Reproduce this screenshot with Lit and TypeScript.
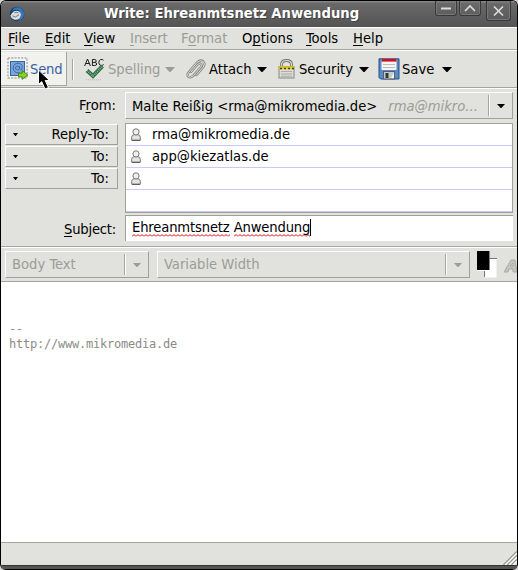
import { LitElement, html, css, svg } from "lit";
import { customElement, property } from "lit/decorators.js";

const arrow = (w: number, h: number) =>
  html`<svg class="arrow" width=${w} height=${h} viewBox="0 0 10 6" preserveAspectRatio="none"><path d="M0 0H10L5.5 6H4.5Z" fill="currentColor" /></svg>`;

const person = html`<svg class="person" width="10" height="13" viewBox="0 0 10 13">
  <path d="M.7 12.3V9.2Q.7 7 3 6.7H7Q9.3 7 9.3 9.2V12.3Z" fill="#e4e4e2" stroke="#777976" />
  <circle cx="5" cy="3.9" r="3.1" fill="#eeeeec" stroke="#777976" />
  <path d="M1 12.3H9" stroke="#555753" />
</svg>`;

const thunderbird = html`<svg width="16" height="16" viewBox="0 0 16 16">
  <circle cx="8" cy="8" r="7.3" fill="#173f75" />
  <path d="M3 5Q5 0 11 1.5Q15.5 4 15 9Q14 14 9 15Q13 11 11.5 6Q8 2 3 5Z" fill="#2f78bd" />
  <path d="M1.5 9.5Q2.5 7 5 5.2Q9 4 11.5 6.5Q12.8 9 11 12Q9 14.2 5.5 13.8Q2 12.5 1.5 9.5Z" fill="#dcdddd" />
  <path d="M3.5 9.8L6.3 11L10 8.8M5.5 6.8Q8 5.6 9.5 7" stroke="#6b6a66" stroke-width=".9" fill="none" />
</svg>`;

const sendIcon = html`<svg width="22" height="23" viewBox="0 0 22 23">
  <rect x="1" y="1" width="19" height="20" fill="#f4f4f0" stroke="#aaaca6" stroke-width="1.5" stroke-dasharray="2 1.3" />
  <rect x="3.5" y="4.5" width="14" height="14" fill="#7ba6da" stroke="#3465a4" />
  <circle cx="10.5" cy="11" r="2" fill="none" stroke="#3d6bab" />
  <path d="M12.6 9V12Q13.5 14 15 12Q16 7 11.8 6.3Q6.4 6 6.2 11Q6.5 16.5 12.5 15.6" fill="none" stroke="#3d6bab" />
  <path d="M11.5 16.2H15.2V13.5L20.8 18L15.2 22.3V19.8H11.5Z" fill="#82d42a" stroke="#4b8b08" />
</svg>`;

const spellIcon = html`<svg width="21" height="23" viewBox="0 0 21 23">
  <g fill="none" stroke="#1c1c1c">
    <path d="M.6 8L3.5 1L6.4 8M1.7 5.5H5.3" />
    <path d="M8.4 7.5V1.5H10.7Q12.4 1.8 12.2 3.2Q12 4.4 10.4 4.4H8.4M10.4 4.4Q12.9 4.6 12.8 6Q12.5 7.5 10.7 7.5H8.4" />
    <path d="M19.5 2.3Q18.3 1 16.7 1.5Q14.7 2.3 14.8 4.8Q15.2 7.5 17.3 7.5Q18.8 7.5 19.7 6.5" />
  </g>
  <path d="M3 12.5L9 18L18.5 8.2" fill="none" stroke="#2d6d43" stroke-width="4" />
  <path d="M3 12.5L9 18L18.5 8.2" fill="none" stroke="#93b49a" stroke-width="1.8" stroke-dasharray="1 1" />
  <path d="M2 21.8H18" stroke="#b8b9b4" stroke-dasharray="1 1" />
</svg>`;

const clipIcon = html`<svg width="20" height="21" viewBox="0 0 20 21">
  <g fill="none" stroke-linecap="round">
    <path d="M5 13L11.5 5.5Q14 3.5 15.2 5.5Q15.8 7 14.5 8.6L7.2 16.8Q4.5 19.3 2.2 17.5Q.8 15.8 2.5 13.5L11 3.5Q14.5 .2 17.3 2.5Q19.5 5 17.3 8L10.5 16" stroke="#858782" stroke-width="2.4" />
    <path d="M5 13L11.5 5.5Q14 3.5 15.2 5.5Q15.8 7 14.5 8.6L7.2 16.8Q4.5 19.3 2.2 17.5Q.8 15.8 2.5 13.5L11 3.5Q14.5 .2 17.3 2.5Q19.5 5 17.3 8L10.5 16" stroke="#dfe0dc" stroke-width="1" />
  </g>
</svg>`;

const lockIcon = html`<svg width="17" height="20" viewBox="0 0 17 20">
  <path d="M3.5 8V5.5Q3.7 1.5 8.5 1.5Q13.3 1.5 13.5 5.5V8" fill="none" stroke="#777974" stroke-width="3" />
  <path d="M3.5 8V5.5Q3.7 1.5 8.5 1.5Q13.3 1.5 13.5 5.5V8" fill="none" stroke="#d6d7d3" stroke-width="1.2" />
  <rect x="1" y="7.5" width="15" height="11.5" fill="#dcdcd8" stroke="#858782" />
  <path d="M1 8.8H16" stroke="#e3c61c" stroke-width="3" />
  <path d="M2 9.5H16" stroke="#4c4300" stroke-width="1.6" stroke-dasharray="2 2" />
  <path d="M3 12.5H14M3 15H14M3 17.2H14" stroke="#aaaca7" />
</svg>`;

const saveIcon = html`<svg width="22" height="22" viewBox="0 0 22 22">
  <path d="M1 .8H21V21H2.5L1 19.5Z" fill="#598bc9" stroke="#244f8c" />
  <rect x="3.5" y="1" width="15" height="11" fill="#f6f6f4" />
  <rect x="3.5" y="1" width="15" height="2.6" fill="#d40f16" />
  <path d="M5 6.5H17M5 9.5H17" stroke="#b9bbb7" />
  <rect x="5.5" y="13.5" width="11" height="7.5" fill="#c7c9c4" stroke="#555f6c" />
  <rect x="7.5" y="15" width="3" height="5" fill="#34383e" />
  <path d="M13 20L16 14V20Z" fill="#f3f3f0" />
</svg>`;

@customElement("tool-item")
class ToolItem extends LitElement {
  @property() label = "";
  @property({ type: Boolean }) muted = false;
  @property({ attribute: false }) icon: unknown;
  static styles = css`
    :host { display: flex; flex: none; align-items: center; height: 36px; color: #000; white-space: nowrap; }
    :host([muted]) { color: #9b9c97; }
    .icon { display: flex; justify-content: center; }
    .label { flex: 1; padding-left: var(--label-gap, 3px); line-height: 20px; }
    .arrow { margin-top: 1px; }
  `;
  render() {
    return html`<span class="icon">${this.icon}</span><span class="label">${this.label}</span>${arrow(10, 5)}`;
  }
}

@customElement("app-root")
class AppRoot extends LitElement {
  static styles = css`
    :host { display: block; width: 518px; height: 570px; background: #d8d4d8; color: #000;
      font: 14.63px/20px "DejaVu Sans Condensed", "DejaVu Sans", sans-serif; font-stretch: condensed; }
    * { box-sizing: border-box; }
    svg { display: block; flex: none; }
    .window { height: 570px; display: flex; flex-direction: column; overflow: hidden; white-space: nowrap;
      background: #e1e2dd; border-radius: 6px; border: 1px solid #000; border-bottom: 0; }
    .titlebar { height: 26px; display: flex; flex: none; background: linear-gradient(#858585 0 1px, #696969 2px, #545454); color: #fff; }
    .logo { padding: 5px 0 0 8px; width: 103px; flex: none; }
    .title { width: 331px; flex: none; font-weight: bold; font-size: 14.67px; line-height: 24px; text-shadow: 1px 1px #404040; }
    .win-button { flex: none; border: 1px solid #393939; border-top: 0; border-radius: 0 0 3px 3px; box-shadow: inset 0 0 0 1px #777; height: 15px; width: 22px; margin-right: 2px; }
    .win-button svg { margin-left: -1px; }
    .win-button.close { width: 25px; height: 20px; margin-left: 3px; }
    .menubar { height: 23px; flex: none; display: flex; border-top: 1px solid #fff; border-bottom: 1px solid #a4a59d; padding: 0 0 0 7px; line-height: 20px; }
    .muted { color: #9b9c97; }
    .toolbar { height: 38px; flex: none; display: flex; align-items: center; border-top: 1px solid #fff; border-bottom: 1px solid #a4a59d; position: relative; }
    .send { flex: none; height: 34px; width: 66px; display: flex; align-items: center; padding-left: 6px; background: #f1f1ee; border-right: 1px solid #a4a59d; border-bottom: 1px solid #a4a59d; color: #3c5ea4; }
    .send span { padding-left: 1px; letter-spacing: -.2px; }
    .sep { width: 2px; height: 21px; flex: none; margin: 0 10px 0 5px; border-left: 1px solid #a4a59d; border-right: 1px solid #fff; }
    .spelling { width: 91px; }
    .attach { width: 81px; margin-left: 11px; --label-gap: 3px; }
    .security { width: 91px; margin-left: 11px; --label-gap: 4px; }
    .save { width: 74px; margin-left: 9px; --label-gap: 2px; }
    .cursor { position: absolute; left: 36px; top: 18px; }
    .fields { height: 159px; flex: none; border-top: 1px solid #fff; border-bottom: 1px solid #a4a59d; padding: 3px 4px 0; display: grid; grid-template-columns: 120px 388px; grid-template-rows: 27px 90px 26px; row-gap: 0; }
    .raised { border: 1px solid; border-color: #fff #a0a197 #a0a197 #fff; display: flex; align-items: center; }
    .name { text-align: right; padding-right: 9px; }
    .name.from-name { padding-top: 3px; }
    u { text-decoration-thickness: 1px; text-underline-offset: 2px; text-decoration-skip-ink: none; }
    .from { padding-left: 6px; }
    .from .text, .row .text, .kind .text { line-height: 18px; padding-bottom: 2px; }
    .from .text { padding-bottom: 0; }
    .hint { font-style: italic; margin-left: 11px; flex: 1; }
    .kinds { padding-top: 5px; display: grid; grid-auto-rows: 21px; row-gap: 1px; width: 113px; align-content: start; }
    .kind { padding: 0 8px 0 7px; justify-content: space-between; }
    .list { margin-top: 4px; height: 90px; border: 1px solid #a0a197; background: #fff; }
    .row { height: 22px; border-bottom: 1px solid #c8c8fc; display: flex; align-items: center; padding-left: 5px; gap: 11px; }
    .name.subject-name { padding-top: 10px; letter-spacing: -.2px; }
    .subject { margin-top: 6px; height: 26px; background: #fff; border: solid #a0a197; border-width: 1px 0 0 1px; display: flex; padding: 1px 0 0 6px; letter-spacing: -.15px; }
    .caret { width: 1px; height: 17px; background: #000; margin-top: 2px; }
    .wrong { height: 20px; background: url("data:image/svg+xml,%3Csvg xmlns='http://www.w3.org/2000/svg' width='4' height='3'%3E%3Cpath d='M0 2.5L2 .5L4 2.5' fill='none' stroke='%23e00000'/%3E%3C/svg%3E") repeat-x left 0 top 17px; }
    .format { height: 35px; flex: none; display: flex; border-top: 1px solid #fff; border-bottom: 1px solid #a4a59d; padding: 3px 0 0 4px; overflow: hidden; }
    .combo { flex: none; height: 27px; padding-left: 6px; margin-right: 7px; color: #9b9c97; }
    .style { width: 144px; margin-right: 8px; }
    .face { width: 313px; }
    .combo span { flex: 1; line-height: 18px; padding-bottom: 2px; }
    .divider { width: 2px; height: 21px; border-left: 1px solid #a4a59d; border-right: 1px solid #fff; margin-right: 7px; }
    .combo .arrow { margin-right: 7px; }
    .from .arrow { margin-right: 7px; }
    .swatches { margin-right: 7px; }
    .body { flex: 1; background: #fff; padding: 40px 0 0 8px; color: #8b8b86; font: 12px/15px "DejaVu Sans Mono", monospace; letter-spacing: -.23px; }
    .status { height: 23px; flex: none; border-top: 1px solid #a4a59d; display: flex; justify-content: flex-end; align-items: flex-end; }
    .frame { height: 5px; flex: none; background: linear-gradient(#333 0 1px, #555 1px 4px, #000 4px); }
  `;

  menus: [string, string, string, number][] = [
    ["", "F", "ile", 37], ["", "E", "dit", 39], ["", "V", "iew", 46], ["", "I", "nsert", 51],
    ["F", "o", "rmat", 61], ["O", "p", "tions", 64], ["", "T", "ools", 47], ["", "H", "elp", 40],
  ];

  render() {
    return html`<div class="window">
      <div class="titlebar">
        <div class="logo">${thunderbird}</div>
        <div class="title">Write: Ehreanmtsnetz Anwendung</div>
        <div class="win-button"><svg width="22" height="15"><path d="M6 7.5H16" stroke="#ddd" stroke-width="2" /></svg></div>
        <div class="win-button"><svg width="22" height="15"><path d="M6 10L11 5L16 10" stroke="#ddd" stroke-width="1.7" fill="none" /></svg></div>
        <div class="win-button close"><svg width="25" height="20"><path d="M8 5.5L17 14.5M17 5.5L8 14.5" stroke="#ddd" stroke-width="1.7" /></svg></div>
      </div>
      <div class="menubar">
        ${this.menus.map(([a, k, b, w], i) => html`<span class=${i === 3 || i === 4 ? "muted" : ""} style="width:${w}px">${a}<u>${k}</u>${b}</span>`)}
      </div>
      <div class="toolbar">
        <div class="send">${sendIcon}<span>Send</span></div>
        <div class="sep"></div>
        <tool-item class="spelling" muted label="Spelling" .icon=${spellIcon}></tool-item>
        <tool-item class="attach" label="Attach" .icon=${clipIcon}></tool-item>
        <tool-item class="security" label="Security" .icon=${lockIcon}></tool-item>
        <tool-item class="save" label="Save" .icon=${saveIcon}></tool-item>
        <svg class="cursor" width="16" height="22" viewBox="0 0 16 22"><path d="M1.5 1V15.5L4.7 12.6L8 20L11.5 18.5L8.2 11.5H12.5Z" fill="#000" stroke="#fff" /></svg>
      </div>
      <div class="fields">
        <div class="name from-name">F<u>r</u>om:</div>
        <div class="raised from"><span class="text">Malte Reißig &lt;rma@mikromedia.de&gt;</span><span class="hint muted">rma@mikro...</span><div class="divider"></div>${arrow(8, 4)}</div>
        <div class="kinds">${["Reply-To:", "To:", "To:"].map((t) => html`<div class="raised kind">${arrow(5, 3)}<span class="text">${t}</span></div>`)}</div>
        <div class="list">${["rma@mikromedia.de", "app@kiezatlas.de", ""].map((t) => html`<div class="row">${person}<span class="text">${t}</span></div>`)}<div class="row"></div></div>
        <div class="name subject-name"><u>S</u>ubject:</div>
        <div class="subject"><span class="wrong">Ehreanmtsnetz</span>&nbsp;<span class="wrong">Anwendung</span><div class="caret"></div></div>
      </div>
      <div class="format">
        <div class="raised combo style"><span>Body Text</span><div class="divider"></div>${arrow(8, 4)}</div>
        <div class="raised combo face"><span>Variable Width</span><div class="divider"></div>${arrow(8, 4)}</div>
        <svg class="swatches" width="20" height="27"><path d="M7.5 26V7.5H20" fill="#fff" stroke="#777" /><path d="M8 8H19.5V26.5H8Z" fill="#fff" /><rect x="-1" y="0" width="14" height="20" fill="#fff" /><rect width="12.5" height="19" fill="#000" /></svg>
        <svg width="14" height="24" viewBox="0 0 14 24"><path d="M0 21L7 9H11L13 21H9V18H5L4 21ZM6 15H9V12Z" fill="#c4c5c0" stroke="#a9aaa4" /></svg>
      </div>
      <div class="body">--<br />http://www.mikromedia.de</div>
      <div class="status"><svg width="14" height="14">${[0, 4, 8].map((n) => svg`<path d="M${n + 0.5} 14L14 ${n + 0.5}" stroke="#8c8d87" stroke-width="1.3" /><path d="M${n + 2} 14L14 ${n + 2}" stroke="#fff" stroke-width="1.2" />`)}</svg></div>
      <div class="frame"></div>
    </div>`;
  }
}
